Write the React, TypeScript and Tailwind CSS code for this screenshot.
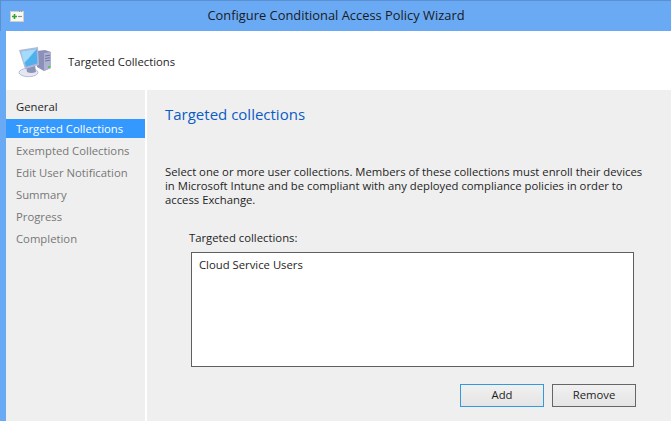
const font = "[font-family:'Open_Sans','Noto_Sans',sans-serif]";

const steps = [
  { label: "General", state: "done" },
  { label: "Targeted Collections", state: "active" },
  { label: "Exempted Collections", state: "off" },
  { label: "Edit User Notification", state: "off" },
  { label: "Summary", state: "off" },
  { label: "Progress", state: "off" },
  { label: "Completion", state: "off" },
];

function getStepClass(state: string) {
  if (state === "active") return "bg-[#3399ff] text-white";
  if (state === "done") return "text-[#1e1e1e]";
  return "text-[#777777]";
}

function TitleIcon() {
  return (
    <svg width="14" height="12" viewBox="0 0 14 12" className="block">
      <rect x="0.5" y="1.5" width="13" height="10" fill="#f8f8f4" stroke="#cfcfc8" />
      <rect x="9" y="0" width="1" height="2" fill="#9a9a9a" />
      <rect x="11" y="0" width="1" height="2" fill="#9a9a9a" />
      <path d="M2 6.5h5M4.5 4v5" stroke="#2fa52f" strokeWidth="1.6" />
      <path d="M8 6.5h4" stroke="#8d8d9a" strokeWidth="1.2" />
    </svg>
  );
}

function ComputerIcon() {
  return (
    <svg width="34" height="34" viewBox="0 0 34 34" className="block">
      {/* tower */}
      <path d="M19 6 L27 5 L33 7 L33 23 L26 26 L19 22 Z" fill="#8b90b8" />
      <path d="M26 8 L33 7 L33 23 L26 26 Z" fill="#aeb2d2" />
      <path d="M27 11 L32 10.2 M27 13.5 L32 12.7 M27 16 L32 15.2" stroke="#70749c" strokeWidth="1" />
      <rect x="30" y="21" width="2" height="2" fill="#4fcf4f" />
      {/* stand */}
      <ellipse cx="10.5" cy="27.5" rx="9.5" ry="4.2" fill="#e4e7f2" stroke="#a4a9c8" strokeWidth="0.7" />
      <path d="M8 22 L9 27 Q13 29 18 27 L17 20 Z" fill="#8d93b8" />
      {/* monitor */}
      <path d="M1 5 L20 2 L21 20 L7 24 Z" fill="#b3b8d8" />
      <path d="M3 6.6 L18.6 4 L19.4 18.6 L8 21.8 Z" fill="#4fb0ee" />
      <path d="M3 6.6 L18.6 4 L11 13 L6 18 Z" fill="#a2dcfa" />
    </svg>
  );
}

function WizardButton({ label, focused }: { label: string; focused?: boolean }) {
  return (
    <button
      type="button"
      className={[
        "h-[23px] w-[84px] border bg-gradient-to-b from-[#f0f0f0] to-[#e5e5e5] text-[11.3px] text-[#1e1e1e]",
        focused ? "border-[#3399dd]" : "border-[#666666]",
      ].join(" ")}
    >
      {label}
    </button>
  );
}

export default function App() {
  return (
    <div className={`flex h-[421px] w-[671px] flex-col overflow-hidden bg-[#6aaaf5] pl-[6px] text-[11.3px] ${font}`}>
      <div className="-ml-[6px] flex h-[31px] shrink-0 items-center border-t border-l border-[#5a8fd0]">
        <div className="ml-[9px] shrink-0">
          <TitleIcon />
        </div>
        <div className="flex-1 pr-[23px] text-center text-[12.9px] text-[#1a1a1a]">
          Configure Conditional Access Policy Wizard
        </div>
      </div>
      <div className="flex h-[59px] shrink-0 items-center bg-white pt-[3px] pl-[12px]">
        <ComputerIcon />
        <span className="ml-[16px] text-[#1e1e1e]">Targeted Collections</span>
      </div>
      <div className="flex min-h-0 flex-1 bg-white">
        <nav className="w-[139px] shrink-0 bg-[#efefef] pt-[7px]">
          {steps.map((step) => (
            <div
              key={step.label}
              className={`mb-[3px] flex h-[19px] items-center pt-px pl-[10px] ${getStepClass(step.state)}`}
            >
              {step.label}
            </div>
          ))}
        </nav>
        <main className="ml-[2px] min-w-0 flex-1 bg-[#efefef] pl-[18px]">
          <h1 className="pt-[12px] text-[15px] leading-[24px] font-normal text-[#0b5cc4]">
            Targeted collections
          </h1>
          <p className="mt-[39px] w-[484px] leading-[14px] text-[#1e1e1e]">
            Select one or more user collections. Members of these collections must enroll their devices in Microsoft
            Intune and be compliant with any deployed compliance policies in order to access Exchange.
          </p>
          <div className="mt-[23px] ml-[24px] leading-[16px] text-[#1e1e1e]">Targeted collections:</div>
          <div className="mt-[6px] ml-[26px] h-[115px] w-[443px] border border-[#5f5f5f] bg-white pt-[4px] pl-[7px] leading-[16px] text-[#1e1e1e]">
            Cloud Service Users
          </div>
          <div className="mt-[17px] ml-[295px] flex gap-[8px]">
            <WizardButton label="Add" focused />
            <WizardButton label="Remove" />
          </div>
        </main>
      </div>
    </div>
  );
}
